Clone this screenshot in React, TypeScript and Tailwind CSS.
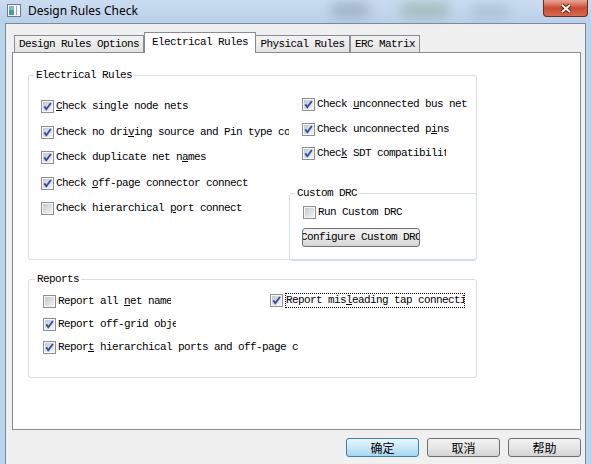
import type { ReactNode } from 'react'

function Box({ on }: { on?: boolean }) {
  return (
    <svg width="13" height="13" viewBox="0 0 13 13" className="shrink-0">
      <defs>
        <linearGradient id="cbg" x1="0" y1="0" x2="1" y2="1">
          <stop offset="0" stopColor="#c4c8d2" />
          <stop offset="1" stopColor="#f3f3f5" />
        </linearGradient>
      </defs>
      <rect x="0.5" y="0.5" width="12" height="12" fill="#f6f6f6" stroke="#8f8f8f" />
      <rect x="2" y="2" width="9" height="9" fill="url(#cbg)" />
      {on && (
        <path d="M3.3 6.4 L5.3 9.2 L9.9 3" fill="none" stroke="#2f4f9f" strokeWidth="1.9" />
      )}
    </svg>
  )
}

function Item({ on, w, children }: { on?: boolean; w?: string; children: ReactNode }) {
  return (
    <div className="flex h-[13px] items-center gap-[2px]">
      <Box on={on} />
      <span className={`overflow-hidden whitespace-nowrap ${w ?? ''}`}>{children}</span>
    </div>
  )
}

function U({ children }: { children: ReactNode }) {
  return <span className="underline underline-offset-[1px]">{children}</span>
}

function Tab({ label, w }: { label: string; w: string }) {
  return (
    <div
      className={`flex h-[18px] items-center justify-center border border-[#898c95] bg-gradient-to-b from-[#f3f3f3] to-[#e3e3e3] ${w}`}
    >
      {label}
    </div>
  )
}

function Btn({ label, primary }: { label: string; primary?: boolean }) {
  return (
    <button
      className={
        primary
          ? "flex h-[19px] w-[73px] items-center justify-center rounded-[3px] border border-[#3c7fb1] bg-gradient-to-b from-[#eaf6fd] via-[#c9e8f8] to-[#a3d6f2] font-['Noto_Sans_CJK_SC',sans-serif] text-[12px] tracking-normal"
          : "flex h-[19px] w-[73px] items-center justify-center rounded-[3px] border border-[#707070] bg-gradient-to-b from-[#f3f3f3] via-[#e6e6e6] to-[#d3d3d3] font-['Noto_Sans_CJK_SC',sans-serif] text-[12px] tracking-normal"
      }
    >
      {label}
    </button>
  )
}

export default function App() {
  return (
    <div className="flex h-[464px] w-[591px] flex-col overflow-hidden bg-[#bcd3eb] font-['Liberation_Mono',monospace] text-[11px] leading-[13px] tracking-[-0.6px] text-black">
      {/* title bar */}
      <div className="relative flex h-[23px] shrink-0 items-start bg-gradient-to-b from-[#cadcf0] to-[#b9d0e9]">
        <div className="absolute left-[330px] top-[2px] h-[16px] w-[40px] rounded-full bg-[#6f8299] opacity-40 blur-[6px]" />
        <div className="absolute left-[400px] top-[2px] h-[16px] w-[50px] rounded-full bg-[#7b977e] opacity-40 blur-[6px]" />
        <div className="absolute left-[470px] top-[4px] h-[14px] w-[40px] rounded-full bg-[#8ea4ba] opacity-40 blur-[6px]" />
        <svg width="14" height="13" viewBox="0 0 14 13" className="relative ml-[7px] mt-[4px]">
          <rect x="0.5" y="0.5" width="13" height="12" fill="#f4f6f8" stroke="#6d7b8a" />
          <rect x="2" y="2" width="5" height="9" fill="#4f9a96" />
          <rect x="2" y="2" width="5" height="4" fill="#7fb7c9" />
          <rect x="9" y="2" width="1" height="9" fill="#9aa6b2" />
        </svg>
        <span className="relative ml-[7px] mt-[3px] font-['Noto_Sans',sans-serif] text-[12px] leading-[16px] tracking-normal">
          Design Rules Check
        </span>
        <div className="relative ml-auto mr-[3px] flex h-[17px] w-[45px] items-center justify-center rounded-b-[4px] border border-t-0 border-[#6b2b1f] bg-gradient-to-b from-[#e9a494] via-[#c94b33] to-[#d8694f]">
          <svg width="14" height="11" viewBox="0 0 14 11">
            <path d="M3 2 L11 9 M11 2 L3 9" stroke="#5a2016" strokeWidth="4" />
            <path d="M3 2 L11 9 M11 2 L3 9" stroke="#ffffff" strokeWidth="2" />
          </svg>
        </div>
      </div>

      {/* window body */}
      <div className="mx-[5px] flex-1 border-x border-t border-[#7b8a9b] bg-[#f0f0f0]">
        {/* tabs */}
        <div className="relative z-10 mb-[-1px] ml-[8px] mt-[8px] flex h-[21px] items-end">
          <Tab label="Design Rules Options" w="w-[130px]" />
          <div className="flex h-[21px] w-[112px] items-center justify-center border border-b-0 border-[#898c95] bg-white pb-[2px]">
            Electrical Rules
          </div>
          <Tab label="Physical Rules" w="w-[94px] border-l-0" />
          <Tab label="ERC Matrix" w="w-[70px]" />
        </div>

        {/* tab panel */}
        <div className="ml-[6px] h-[378px] w-[569px] border border-[#898c95] bg-white">
          <fieldset className="ml-[15px] mt-[16px] h-[191px] w-[449px] rounded-[3px] border border-[#d5dfe5]">
            <legend className="ml-[5px] px-[2px]">Electrical Rules</legend>
            <div className="flex h-[178px]">
              <div className="flex w-[260px] flex-col gap-[12.5px] pl-[12px] pt-[18px]">
                <Item on>
                  <U>C</U>heck single node nets
                </Item>
                <Item on w="w-[234px]">
                  Check no dri<U>v</U>ing source and Pin type connections
                </Item>
                <Item on>
                  Check duplicate net n<U>a</U>mes
                </Item>
                <Item on>
                  Check <U>o</U>ff-page connector connect
                </Item>
                <Item>
                  Check hierarchical <U>p</U>ort connect
                </Item>
              </div>
              <div className="flex w-[187px] flex-col">
                <div className="flex flex-col gap-[11.5px] pl-[13px] pt-[16px]">
                  <Item on>
                    Check <U>u</U>nconnected bus net
                  </Item>
                  <Item on>
                    Check unconnected p<U>i</U>ns
                  </Item>
                  <Item on w="w-[129px]">
                    Chec<U>k</U> SDT compatibility
                  </Item>
                </div>
                <fieldset className="-mb-px -mr-px mt-auto h-[74px] rounded-[3px] border border-[#d5dfe5]">
                  <legend className="ml-[5px] px-[2px]">Custom DRC</legend>
                  <div className="pl-[13px] pt-[6px]">
                    <div className="flex h-[13px] items-center gap-[2px]">
                      <Box />
                      <span className="whitespace-nowrap">Run Custom DRC</span>
                    </div>
                    <div className="ml-[-1px] mt-[9px] flex h-[19px] w-[118px] items-center justify-center overflow-hidden whitespace-nowrap rounded-[3px] border border-[#707070] bg-gradient-to-b from-[#f3f3f3] via-[#e8e8e8] to-[#d6d6d6]">
                      Configure Custom DRC
                    </div>
                  </div>
                </fieldset>
              </div>
            </div>
          </fieldset>

          <fieldset className="ml-[15px] mt-[13px] h-[105px] w-[449px] rounded-[3px] border border-[#d5dfe5]">
            <legend className="ml-[6px] px-[2px]">Reports</legend>
            <div className="flex flex-col gap-[10px] pl-[14px] pt-[9px]">
              <div className="flex items-start">
                <div className="w-[227px]">
                  <Item w="w-[113px]">
                    Report all <U>n</U>et names
                  </Item>
                </div>
                <div className="-mt-[2px] flex h-[15px] items-center gap-[2px]">
                  <Box on />
                  <span className="flex h-[15px] w-[180px] items-center overflow-hidden whitespace-nowrap border border-dotted border-black">
                    Report mis<U>l</U>eading tap connections
                  </span>
                </div>
              </div>
              <Item on w="w-[118px]">
                Report off-grid objects
              </Item>
              <Item on w="w-[240px]">
                Repor<U>t</U> hierarchical ports and off-page connectors
              </Item>
            </div>
          </fieldset>
        </div>

        {/* buttons */}
        <div className="ml-[6px] mt-[8px] flex w-[569px] justify-end gap-[8px]">
          <Btn label="确定" primary />
          <Btn label="取消" />
          <Btn label="帮助" />
        </div>
      </div>
    </div>
  )
}
